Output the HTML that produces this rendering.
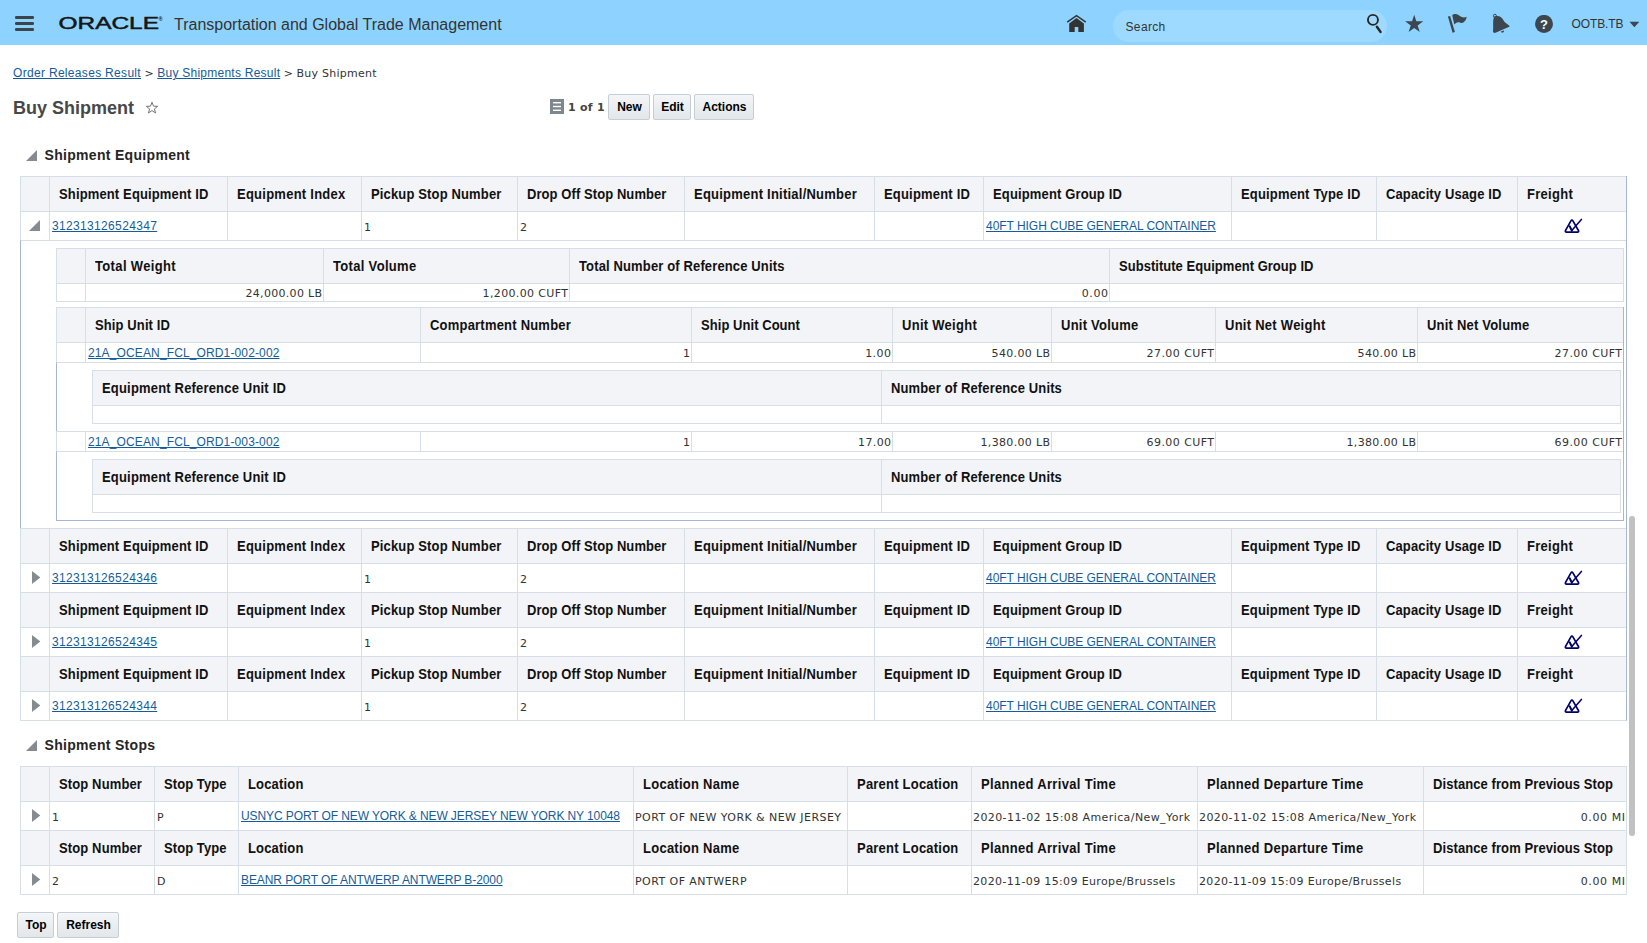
<!DOCTYPE html><html><head><meta charset='utf-8'><title>Buy Shipment</title><style>
*{box-sizing:border-box}
html,body{margin:0;padding:0}
body{width:1647px;height:943px;overflow:hidden;background:#fff;position:relative;font-family:"DejaVu Sans","Liberation Sans",sans-serif;font-size:11px;color:#333}
a{color:#145c9e;text-decoration:underline;font-family:"Liberation Sans",sans-serif;font-size:12px}
.abs{position:absolute}
#hdr{position:absolute;left:0;top:0;width:1647px;height:45px;background:#8ed3ff}
#hdr .title{position:absolute;left:174px;top:15px;font:16px/20px "Liberation Sans",sans-serif;color:#333;white-space:nowrap}
#search{position:absolute;left:1113px;top:10px;width:274px;height:32px;border-radius:16px;background:#9edaff}
#search span{position:absolute;left:12.5px;top:9px;font:12px/16px "Liberation Sans",sans-serif;color:#333;letter-spacing:.35px}
.user{position:absolute;left:1571.5px;top:16px;font:12px/16px "Liberation Sans",sans-serif;color:#333;letter-spacing:-.12px;white-space:nowrap}
.crumb{position:absolute;left:13px;top:65px;white-space:nowrap;line-height:16px;font-size:11px;color:#333}
h1{position:absolute;left:13px;top:96px;margin:0;font:bold 18px/24px "Liberation Sans",sans-serif;color:#484848;white-space:nowrap}
.btn{position:absolute;height:26px;border:1px solid #c4ced7;border-radius:2px;background:linear-gradient(#f3f5f7,#e3e7ea);font:bold 12px/24px "Liberation Sans",sans-serif;color:#000;text-align:center;white-space:nowrap;padding-left:1px}
.sec{position:absolute;font:bold 14px/18px "Liberation Sans",sans-serif;color:#252525;letter-spacing:.31px;white-space:nowrap}
table{border-collapse:separate;border-spacing:0;table-layout:fixed;position:absolute}
td,th{padding:0;border-left:1px solid #d6dfe6;border-top:1px solid #d6dfe6;overflow:hidden;white-space:nowrap;vertical-align:top;text-align:left;font-weight:normal}
th{background:#f2f4f7;font:bold 13px/16px "Liberation Sans",sans-serif;color:#111;padding:10px 0 0 9px;letter-spacing:.09px}
th span{display:inline-block;transform:scaleY(1.09);transform-origin:0 12.5px}
th.in{padding-left:9px}
td{padding:7px 0 0 2px;font-size:11px;line-height:14px}
td.p{padding-top:9px}
td.q{padding-left:1px}
td.s{padding-top:3px}
td.v{padding-top:4px}
td.r{text-align:right;padding-right:1px;padding-left:0}
td.d{padding:0;position:relative;overflow:visible}
td.i{padding:0}
td.i svg{display:block}
</style></head><body>
<div id="hdr">
<svg class="abs" style="left:15px;top:16px" width="19" height="15" viewBox="0 0 19 15"><g fill="#3c434a"><rect x="0" y="0" width="19" height="3" rx="1.2"/><rect x="0" y="6" width="19" height="3" rx="1.2"/><rect x="0" y="12" width="19" height="3" rx="1.2"/></g></svg>
<svg class="abs" style="left:56px;top:12px" width="110" height="22" viewBox="0 0 110 22"><text x="2.5" y="16.8" font-family="Liberation Sans, sans-serif" font-size="17.3" fill="#161616" stroke="#161616" stroke-width=".5" textLength="100.5" lengthAdjust="spacingAndGlyphs">ORACLE</text><text x="102.6" y="9" font-family="Liberation Sans, sans-serif" font-size="5.5" font-weight="bold" fill="#161616">®</text></svg>
<div class="title">Transportation and Global Trade Management</div>
<svg class="abs" style="left:1066px;top:14px" width="21" height="19" viewBox="0 0 21 19"><path d="M1.2 8.2 L10.5 1.7 L19.8 8.2" fill="none" stroke="#333" stroke-width="1.5"/><path d="M3.2 9.4 L10.5 4 L17.9 9.4 V17.9 H12.3 V13.1 H8.7 V17.9 H3.2 Z" fill="#333"/></svg>
<div id="search"><span>Search</span></div>
<svg class="abs" style="left:1366px;top:13px" width="17" height="21" viewBox="0 0 17 21"><circle cx="6.95" cy="6.9" r="5" fill="none" stroke="#2a2522" stroke-width="1.9"/><path d="M10.9 13.7 L14.5 18.9" stroke="#2a2522" stroke-width="2.5" stroke-linecap="round"/></svg>
<svg class="abs" style="left:1404px;top:14px" width="21" height="20" viewBox="0 0 21 20"><path d="M10.20 0.80 L12.33 7.36 L19.24 7.36 L13.65 11.42 L15.78 17.99 L10.20 13.93 L4.62 17.99 L6.75 11.42 L1.16 7.36 L8.07 7.36 Z" fill="#3c464e"/></svg>
<svg class="abs" style="left:1440px;top:8px" width="80" height="32" viewBox="0 0 80 32"><g fill="#3c464e"><path d="M7.9 8.5 L10.1 7.9 L14.9 24.1 L12.6 24.8 Z"/><path d="M12.2 7.3 C13.5 5.6 16.5 5.5 18.5 7 C21 8.9 23.5 10.5 26.8 8.8 C26.3 11.5 25 13.2 23.3 14.6 C21.5 15.8 20 14 18 14.3 C16.3 14.6 15.2 15.6 14.3 16.6 Z"/><path d="M53.7 9.4 C55 7.9 58.6 7.6 60.7 9 C62.9 10.4 63.4 12.6 64.9 14.2 C66.4 15.9 68.6 16.6 69.8 18.6 L55.5 24.8 C54.3 25.2 53 24.6 53 23.2 C53.6 19 52.6 13.5 53.7 9.4 Z"/><path d="M60.9 23.6 A1.5 1.5 0 0 0 63.9 22.5 Z"/></g><circle cx="54.9" cy="7.8" r="1.5" fill="none" stroke="#3c464e" stroke-width="1"/></svg>
<svg class="abs" style="left:1535px;top:15px" width="18" height="18" viewBox="0 0 18 18"><circle cx="9" cy="8.9" r="9" fill="#3c464e"/><text x="9.1" y="13.5" text-anchor="middle" font-family="Liberation Sans, sans-serif" font-weight="bold" font-size="13" fill="#f4faff">?</text></svg>
<div class="user">OOTB.TB</div>
<svg class="abs" style="left:1629px;top:21px" width="11" height="7" viewBox="0 0 11 7"><path d="M0.5 0.8 H10.3 L5.4 6.2 Z" fill="#3c464e"/></svg>
</div>
<div class="crumb"><a style="letter-spacing:0.315px">Order Releases Result</a> &gt; <a style="letter-spacing:0.247px">Buy Shipments Result</a> &gt; <span style="letter-spacing:0.268px">Buy Shipment</span></div>
<h1>Buy Shipment</h1>
<svg class="abs" style="left:145px;top:101px" width="14" height="13" viewBox="0 0 14 13"><path d="M7 1.2 L8.5 5.2 L12.8 5.3 L9.4 7.9 L10.6 12 L7 9.6 L3.4 12 L4.6 7.9 L1.2 5.3 L5.5 5.2 Z" fill="none" stroke="#777" stroke-width="1"/></svg>
<svg class="abs" style="left:550px;top:99px" width="14" height="15" viewBox="0 0 14 15"><rect width="14" height="15" fill="#7f878e"/><g fill="#fff"><rect x="3" y="3" width="8" height="1.4"/><rect x="3" y="6.8" width="8" height="1.4"/><rect x="3" y="10.6" width="8" height="1.4"/></g></svg>
<div class="abs" style="left:568px;top:101px;font:bold 11px/14px 'DejaVu Sans',sans-serif;color:#4a4340;white-space:nowrap;letter-spacing:.25px">1 of 1</div>
<div class="btn" style="left:608px;top:94px;width:42px">New</div>
<div class="btn" style="left:653px;top:94px;width:38px">Edit</div>
<div class="btn" style="left:694px;top:94px;width:60px">Actions</div>
<svg class="abs" style="left:26px;top:150px" width="11" height="11" viewBox="0 0 11 11"><path d="M11 0 V11 H0 Z" fill="#858b90"/></svg>
<div class="sec" style="left:44.5px;top:146px">Shipment Equipment</div>
<table id="eq" style="left:20px;top:176px;width:1607px;border-right:1px solid #a9b5d6;border-bottom:1px solid #d6dfe6">
<colgroup><col style="width:29px"><col style="width:178px"><col style="width:134px"><col style="width:156px"><col style="width:167px"><col style="width:190px"><col style="width:109px"><col style="width:248px"><col style="width:145px"><col style="width:141px"><col style="width:109px"></colgroup>
<tr style="height:35px"><th></th><th><span style="letter-spacing:0.138px">Shipment Equipment ID</span></th><th><span style="letter-spacing:0.251px">Equipment Index</span></th><th><span style="letter-spacing:0.147px">Pickup Stop Number</span></th><th><span style="letter-spacing:0.078px">Drop Off Stop Number</span></th><th><span style="letter-spacing:0.231px">Equipment Initial/Number</span></th><th><span style="letter-spacing:0.185px">Equipment ID</span></th><th><span style="letter-spacing:0.145px">Equipment Group ID</span></th><th><span style="letter-spacing:0.161px">Equipment Type ID</span></th><th><span style="letter-spacing:0.122px">Capacity Usage ID</span></th><th><span style="letter-spacing:0.278px">Freight</span></th></tr>
<tr style="height:29px"><td class="i"><svg width="28" height="28" viewBox="0 0 28 28"><path d="M19 8 V19 H8 Z" fill="#858b90"/></svg></td><td><a style="letter-spacing:0.34px">312313126524347</a></td><td></td><td class="p">1</td><td class="p">2</td><td></td><td></td><td><a style="letter-spacing:-0.041px">40FT HIGH CUBE GENERAL CONTAINER</a></td><td></td><td></td><td class="i"><svg width="108" height="28" viewBox="0 0 108 28"><g transform="translate(34 0)" fill="none" stroke="#00006a" stroke-linejoin="round" stroke-linecap="round"><path d="M13.7 18.2 L18.9 8.9 Q19.9 7.2 20.9 8.9 L26.3 18.2 Q27.4 20.1 25.3 20.1 L14.7 20.1 Q12.6 20.1 13.7 18.2 Z" stroke-width="1.7"/><path d="M17.7 14.3 L19.8 18.6" stroke-width="2"/><path d="M19.8 18.6 L29.4 7.4" stroke-width="1.5"/></g></svg></td></tr>
<tr style="height:288px"><td class="d" colspan="11" style="border-left-color:#a9b5d6">
<table style="left:35px;top:7px;width:1568px;border-right:1px solid #d6dfe6;border-bottom:1px solid #d6dfe6"><colgroup><col style="width:29px"><col style="width:238px"><col style="width:246px"><col style="width:540px"><col style="width:514px"></colgroup><tr style="height:35px"><th class="in"></th><th class="in"><span style="letter-spacing:0.351px">Total Weight</span></th><th class="in"><span style="letter-spacing:0.318px">Total Volume</span></th><th class="in"><span style="letter-spacing:0.136px">Total Number of Reference Units</span></th><th class="in"><span style="letter-spacing:0.033px">Substitute Equipment Group ID</span></th></tr><tr style="height:18px"><td class="s"></td><td class="s r"><span style="letter-spacing:0.304px;margin-right:-0.304px">24,000.00 LB</span></td><td class="s r"><span style="letter-spacing:0.364px;margin-right:-0.364px">1,200.00 CUFT</span></td><td class="s r"><span style="letter-spacing:0.577px;margin-right:-0.577px">0.00</span></td><td class="s"></td></tr></table>
<table style="left:35px;top:66px;width:1568px;border-right:1px solid #a9b5d6;border-bottom:1px solid #a9b5d6"><colgroup><col style="width:29px"><col style="width:335px"><col style="width:271px"><col style="width:201px"><col style="width:159px"><col style="width:164px"><col style="width:202px"><col style="width:206px"></colgroup><tr style="height:35px"><th class="in"></th><th class="in"><span style="letter-spacing:0.112px">Ship Unit ID</span></th><th class="in"><span style="letter-spacing:0.209px">Compartment Number</span></th><th class="in"><span style="letter-spacing:0.053px">Ship Unit Count</span></th><th class="in"><span style="letter-spacing:0.275px">Unit Weight</span></th><th class="in"><span style="letter-spacing:0.239px">Unit Volume</span></th><th class="in"><span style="letter-spacing:0.265px">Unit Net Weight</span></th><th class="in"><span style="letter-spacing:0.205px">Unit Net Volume</span></th></tr><tr style="height:20px"><td class="s"></td><td class="s"><a style="letter-spacing:0.131px">21A_OCEAN_FCL_ORD1-002-002</a></td><td class="v r">1</td><td class="v r"><span style="letter-spacing:0.452px;margin-right:-0.452px">1.00</span></td><td class="v r"><span style="letter-spacing:0.349px;margin-right:-0.349px">540.00 LB</span></td><td class="v r"><span style="letter-spacing:0.423px;margin-right:-0.423px">27.00 CUFT</span></td><td class="v r"><span style="letter-spacing:0.349px;margin-right:-0.349px">540.00 LB</span></td><td class="v r"><span style="letter-spacing:0.423px;margin-right:-0.423px">27.00 CUFT</span></td></tr><tr style="height:69px"><td class="d" colspan="8" style="border-left-color:#a9b5d6"><table style="left:35px;top:7px;width:1529px;border-right:1px solid #d6dfe6;border-bottom:1px solid #d6dfe6"><colgroup><col style="width:789px"><col style="width:739px"></colgroup><tr style="height:35px"><th class="in"><span style="letter-spacing:0.18px">Equipment Reference Unit ID</span></th><th class="in"><span style="letter-spacing:0.136px">Number of Reference Units</span></th></tr><tr style="height:18px"><td class="s"></td><td class="s"></td></tr></table></td></tr><tr style="height:20px"><td class="s"></td><td class="s"><a style="letter-spacing:0.131px">21A_OCEAN_FCL_ORD1-003-002</a></td><td class="v r">1</td><td class="v r"><span style="letter-spacing:0.362px;margin-right:-0.362px">17.00</span></td><td class="v r"><span style="letter-spacing:0.331px;margin-right:-0.331px">1,380.00 LB</span></td><td class="v r"><span style="letter-spacing:0.423px;margin-right:-0.423px">69.00 CUFT</span></td><td class="v r"><span style="letter-spacing:0.331px;margin-right:-0.331px">1,380.00 LB</span></td><td class="v r"><span style="letter-spacing:0.423px;margin-right:-0.423px">69.00 CUFT</span></td></tr><tr style="height:69px"><td class="d" colspan="8" style="border-left-color:#a9b5d6"><table style="left:35px;top:7px;width:1529px;border-right:1px solid #d6dfe6;border-bottom:1px solid #d6dfe6"><colgroup><col style="width:789px"><col style="width:739px"></colgroup><tr style="height:35px"><th class="in"><span style="letter-spacing:0.18px">Equipment Reference Unit ID</span></th><th class="in"><span style="letter-spacing:0.136px">Number of Reference Units</span></th></tr><tr style="height:18px"><td class="s"></td><td class="s"></td></tr></table></td></tr></table>
</td></tr>
<tr style="height:35px"><th></th><th><span style="letter-spacing:0.138px">Shipment Equipment ID</span></th><th><span style="letter-spacing:0.251px">Equipment Index</span></th><th><span style="letter-spacing:0.147px">Pickup Stop Number</span></th><th><span style="letter-spacing:0.078px">Drop Off Stop Number</span></th><th><span style="letter-spacing:0.231px">Equipment Initial/Number</span></th><th><span style="letter-spacing:0.185px">Equipment ID</span></th><th><span style="letter-spacing:0.145px">Equipment Group ID</span></th><th><span style="letter-spacing:0.161px">Equipment Type ID</span></th><th><span style="letter-spacing:0.122px">Capacity Usage ID</span></th><th><span style="letter-spacing:0.278px">Freight</span></th></tr>
<tr style="height:29px"><td class="i"><svg width="28" height="28" viewBox="0 0 28 28"><path d="M11 7 L19.3 13.5 L11 20 Z" fill="#858b90"/></svg></td><td><a style="letter-spacing:0.34px">312313126524346</a></td><td></td><td class="p">1</td><td class="p">2</td><td></td><td></td><td><a style="letter-spacing:-0.041px">40FT HIGH CUBE GENERAL CONTAINER</a></td><td></td><td></td><td class="i"><svg width="108" height="28" viewBox="0 0 108 28"><g transform="translate(34 0)" fill="none" stroke="#00006a" stroke-linejoin="round" stroke-linecap="round"><path d="M13.7 18.2 L18.9 8.9 Q19.9 7.2 20.9 8.9 L26.3 18.2 Q27.4 20.1 25.3 20.1 L14.7 20.1 Q12.6 20.1 13.7 18.2 Z" stroke-width="1.7"/><path d="M17.7 14.3 L19.8 18.6" stroke-width="2"/><path d="M19.8 18.6 L29.4 7.4" stroke-width="1.5"/></g></svg></td></tr>
<tr style="height:35px"><th></th><th><span style="letter-spacing:0.138px">Shipment Equipment ID</span></th><th><span style="letter-spacing:0.251px">Equipment Index</span></th><th><span style="letter-spacing:0.147px">Pickup Stop Number</span></th><th><span style="letter-spacing:0.078px">Drop Off Stop Number</span></th><th><span style="letter-spacing:0.231px">Equipment Initial/Number</span></th><th><span style="letter-spacing:0.185px">Equipment ID</span></th><th><span style="letter-spacing:0.145px">Equipment Group ID</span></th><th><span style="letter-spacing:0.161px">Equipment Type ID</span></th><th><span style="letter-spacing:0.122px">Capacity Usage ID</span></th><th><span style="letter-spacing:0.278px">Freight</span></th></tr>
<tr style="height:29px"><td class="i"><svg width="28" height="28" viewBox="0 0 28 28"><path d="M11 7 L19.3 13.5 L11 20 Z" fill="#858b90"/></svg></td><td><a style="letter-spacing:0.34px">312313126524345</a></td><td></td><td class="p">1</td><td class="p">2</td><td></td><td></td><td><a style="letter-spacing:-0.041px">40FT HIGH CUBE GENERAL CONTAINER</a></td><td></td><td></td><td class="i"><svg width="108" height="28" viewBox="0 0 108 28"><g transform="translate(34 0)" fill="none" stroke="#00006a" stroke-linejoin="round" stroke-linecap="round"><path d="M13.7 18.2 L18.9 8.9 Q19.9 7.2 20.9 8.9 L26.3 18.2 Q27.4 20.1 25.3 20.1 L14.7 20.1 Q12.6 20.1 13.7 18.2 Z" stroke-width="1.7"/><path d="M17.7 14.3 L19.8 18.6" stroke-width="2"/><path d="M19.8 18.6 L29.4 7.4" stroke-width="1.5"/></g></svg></td></tr>
<tr style="height:35px"><th></th><th><span style="letter-spacing:0.138px">Shipment Equipment ID</span></th><th><span style="letter-spacing:0.251px">Equipment Index</span></th><th><span style="letter-spacing:0.147px">Pickup Stop Number</span></th><th><span style="letter-spacing:0.078px">Drop Off Stop Number</span></th><th><span style="letter-spacing:0.231px">Equipment Initial/Number</span></th><th><span style="letter-spacing:0.185px">Equipment ID</span></th><th><span style="letter-spacing:0.145px">Equipment Group ID</span></th><th><span style="letter-spacing:0.161px">Equipment Type ID</span></th><th><span style="letter-spacing:0.122px">Capacity Usage ID</span></th><th><span style="letter-spacing:0.278px">Freight</span></th></tr>
<tr style="height:29px"><td class="i"><svg width="28" height="28" viewBox="0 0 28 28"><path d="M11 7 L19.3 13.5 L11 20 Z" fill="#858b90"/></svg></td><td><a style="letter-spacing:0.34px">312313126524344</a></td><td></td><td class="p">1</td><td class="p">2</td><td></td><td></td><td><a style="letter-spacing:-0.041px">40FT HIGH CUBE GENERAL CONTAINER</a></td><td></td><td></td><td class="i"><svg width="108" height="28" viewBox="0 0 108 28"><g transform="translate(34 0)" fill="none" stroke="#00006a" stroke-linejoin="round" stroke-linecap="round"><path d="M13.7 18.2 L18.9 8.9 Q19.9 7.2 20.9 8.9 L26.3 18.2 Q27.4 20.1 25.3 20.1 L14.7 20.1 Q12.6 20.1 13.7 18.2 Z" stroke-width="1.7"/><path d="M17.7 14.3 L19.8 18.6" stroke-width="2"/><path d="M19.8 18.6 L29.4 7.4" stroke-width="1.5"/></g></svg></td></tr>
</table>
<svg class="abs" style="left:26px;top:740px" width="11" height="11" viewBox="0 0 11 11"><path d="M11 0 V11 H0 Z" fill="#858b90"/></svg>
<div class="sec" style="left:44.5px;top:736px">Shipment Stops</div>
<table id="st" style="left:20px;top:766px;width:1607px;border-right:1px solid #d6dfe6;border-bottom:1px solid #d6dfe6">
<colgroup><col style="width:29px"><col style="width:105px"><col style="width:84px"><col style="width:395px"><col style="width:214px"><col style="width:124px"><col style="width:226px"><col style="width:226px"><col style="width:203px"></colgroup>
<tr style="height:35px"><th></th><th><span style="letter-spacing:0.126px">Stop Number</span></th><th><span style="letter-spacing:0.07px">Stop Type</span></th><th><span style="letter-spacing:0.167px">Location</span></th><th><span style="letter-spacing:0.255px">Location Name</span></th><th><span style="letter-spacing:0.218px">Parent Location</span></th><th><span style="letter-spacing:0.321px">Planned Arrival Time</span></th><th><span style="letter-spacing:0.327px">Planned Departure Time</span></th><th><span style="letter-spacing:0.085px">Distance from Previous Stop</span></th></tr>
<tr style="height:29px"><td class="i"><svg width="28" height="28" viewBox="0 0 28 28"><path d="M11 7 L19.3 13.5 L11 20 Z" fill="#858b90"/></svg></td><td class="p">1</td><td class="p">P</td><td><a style="letter-spacing:-0.098px">USNYC PORT OF NEW YORK &amp; NEW JERSEY NEW YORK NY 10048</a></td><td class="p q"><span style="letter-spacing:0.444px">PORT OF NEW YORK &amp; NEW JERSEY</span></td><td></td><td class="p q"><span style="letter-spacing:0.407px">2020-11-02 15:08 America/New_York</span></td><td class="p q"><span style="letter-spacing:0.407px">2020-11-02 15:08 America/New_York</span></td><td class="p r"><span style="letter-spacing:0.582px;margin-right:-0.582px">0.00 MI</span></td></tr>
<tr style="height:35px"><th></th><th><span style="letter-spacing:0.126px">Stop Number</span></th><th><span style="letter-spacing:0.07px">Stop Type</span></th><th><span style="letter-spacing:0.167px">Location</span></th><th><span style="letter-spacing:0.255px">Location Name</span></th><th><span style="letter-spacing:0.218px">Parent Location</span></th><th><span style="letter-spacing:0.321px">Planned Arrival Time</span></th><th><span style="letter-spacing:0.327px">Planned Departure Time</span></th><th><span style="letter-spacing:0.085px">Distance from Previous Stop</span></th></tr>
<tr style="height:29px"><td class="i"><svg width="28" height="28" viewBox="0 0 28 28"><path d="M11 7 L19.3 13.5 L11 20 Z" fill="#858b90"/></svg></td><td class="p">2</td><td class="p">D</td><td><a style="letter-spacing:-0.083px">BEANR PORT OF ANTWERP ANTWERP B-2000</a></td><td class="p q"><span style="letter-spacing:0.439px">PORT OF ANTWERP</span></td><td></td><td class="p q"><span style="letter-spacing:0.357px">2020-11-09 15:09 Europe/Brussels</span></td><td class="p q"><span style="letter-spacing:0.357px">2020-11-09 15:09 Europe/Brussels</span></td><td class="p r"><span style="letter-spacing:0.582px;margin-right:-0.582px">0.00 MI</span></td></tr>
</table>
<div class="btn" style="left:17px;top:912px;width:37px">Top</div>
<div class="btn" style="left:57px;top:912px;width:62px">Refresh</div>
<div class="abs" style="left:1629px;top:516px;width:6px;height:320px;border-radius:3px;background:#c1c1c1"></div>
</body></html>
